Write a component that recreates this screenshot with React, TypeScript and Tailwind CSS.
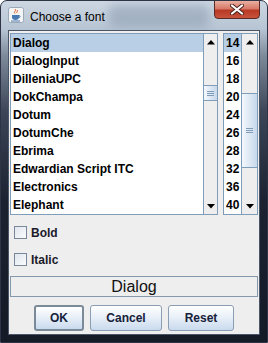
import React from "react";

const fonts = [
  "Dialog",
  "DialogInput",
  "DilleniaUPC",
  "DokChampa",
  "Dotum",
  "DotumChe",
  "Ebrima",
  "Edwardian Script ITC",
  "Electronics",
  "Elephant",
];
const sizes = ["14", "16", "18", "20", "24", "26", "28", "32", "36", "40"];

function Arrow({ down }: { down?: boolean }) {
  return (
    <svg width="8" height="5" viewBox="0 0 8 5">
      <path d={down ? "M0 0H8L4 4.5Z" : "M0 4.5H8L4 0Z"} fill="#000" />
    </svg>
  );
}

function Grip() {
  return (
    <div className="flex flex-col gap-[1px] items-center">
      <div className="w-[7px] h-[1px] bg-[#7f9db9]" />
      <div className="w-[7px] h-[1px] bg-[#7f9db9]" />
      <div className="w-[7px] h-[1px] bg-[#7f9db9]" />
    </div>
  );
}

function ScrollBar({ thumbTop, thumbH, w }: { thumbTop: number; thumbH: number; w: string }) {
  return (
    <div className={`${w} border-l border-[#7f9db9] bg-[#eeeeee] flex flex-col`}>
      <div className="h-[16px] flex items-center justify-center">
        <Arrow />
      </div>
      <div className="flex-1 flex flex-col">
        <div style={{ height: thumbTop }} />
        <div
          style={{ height: thumbH }}
          className="border-y border-[#7f9db9] bg-[linear-gradient(90deg,#f4f8fc,#c6d8ec)] flex items-center justify-center"
        >
          <Grip />
        </div>
      </div>
      <div className="h-[16px] flex items-center justify-center">
        <Arrow down />
      </div>
    </div>
  );
}

function JavaIcon() {
  return (
    <svg width="16" height="16" viewBox="0 0 16 16">
      <rect x="0.5" y="0.5" width="15" height="15" rx="2" fill="#f4f4f4" stroke="#9aa8b8" />
      <path d="M7 2c2 1.5-2 3 0 4.5M9 3c1.5 1-1 2 0 3" stroke="#e0581e" strokeWidth="1" fill="none" />
      <path d="M4 8h7v2.5c0 1.5-1.5 2.5-3.5 2.5S4 12 4 10.5Z" fill="#4a78b0" />
      <path d="M11 8.5c1.5 0 1.5 2 0 2" stroke="#4a78b0" fill="none" />
      <path d="M3 14h9" stroke="#4a78b0" />
    </svg>
  );
}

function Button({ label, w, def }: { label: string; w: string; def?: boolean }) {
  return (
    <div
      className={`${w} h-[26px] rounded-[3px] ${
        def ? "border-2 border-[#7b8a99]" : "border border-[#8b9db3]"
      } bg-[linear-gradient(180deg,#ffffff,#e9f0f8_45%,#c9daee)] flex items-center justify-center text-[12px] font-bold text-[#16213a]`}
    >
      {label}
    </div>
  );
}

function CheckRow({ label }: { label: string }) {
  return (
    <div className="flex items-center h-[13px] pl-[4px]">
      <div className="w-[13px] h-[13px] border border-[#7a8797] bg-[linear-gradient(135deg,#dfe6ee,#fbfcfd)]" />
      <span className="ml-[4px] text-[12px] font-bold text-[#1a1a2a]">{label}</span>
    </div>
  );
}

export default function App() {
  return (
    <div
      className="w-[268px] h-[343px] flex flex-col rounded-t-[7px] border border-[#2c3446] bg-[linear-gradient(180deg,#cdd7e2_0px,#b6c4d3_28px,#7d8a9a_55px,#3c4658_110px,#1c2230_200px,#141a26_343px)] overflow-hidden"
      style={{ fontFamily: '"Liberation Sans", Arial, sans-serif' }}
    >
      <div className="relative h-[29px] flex items-start shrink-0 overflow-hidden">
        <div className="absolute left-[108px] top-[4px] w-[100px] h-[22px] rounded-[6px] bg-[#8797ad] blur-[5px] opacity-50" />
        <div className="relative mt-[6px] ml-[7px]">
          <JavaIcon />
        </div>
        <div className="relative ml-[6px] mt-[7px] text-[12px] text-black">Choose a font</div>
        <div className="relative ml-auto mr-[7px] w-[46px] h-[19px] -mt-[1px] rounded-b-[4px] border border-[#5a2a26] bg-[linear-gradient(180deg,#e9b0a2_0%,#d67a68_45%,#b83a26_55%,#c8523c_100%)] flex items-center justify-center">
          <svg width="14" height="11" viewBox="0 0 14 11">
            <path d="M2 1.5L12 9.5M12 1.5L2 9.5" stroke="#4a2320" strokeWidth="4" strokeLinecap="round" />
            <path d="M2 1.5L12 9.5M12 1.5L2 9.5" stroke="#ffffff" strokeWidth="2.2" strokeLinecap="round" />
          </svg>
        </div>
      </div>

      <div className="mx-[7px] h-[305px] border border-[#4a5568] bg-[#eeeeee] px-[1px] pt-[2px] flex flex-col">
        <div className="flex gap-[5px]">
          <div className="w-[208px] h-[182px] border border-[#7f9db9] flex bg-white">
            <div className="flex-1 flex flex-col">
              {fonts.map((f, i) => (
                <div
                  key={f}
                  className={`h-[18px] flex items-center pl-[2px] text-[12px] font-bold text-black ${
                    i === 0 ? "bg-[#b8cfe5]" : ""
                  }`}
                >
                  {f}
                </div>
              ))}
            </div>
            <ScrollBar w="w-[14px]" thumbTop={35} thumbH={16} />
          </div>
          <div className="w-[35px] h-[182px] border border-[#7f9db9] flex bg-white">
            <div className="flex-1 flex flex-col">
              {sizes.map((s, i) => (
                <div
                  key={s}
                  className={`h-[18px] flex items-center pl-[2px] text-[12px] font-bold text-black ${
                    i === 0 ? "bg-[#b8cfe5]" : ""
                  }`}
                >
                  {s}
                </div>
              ))}
            </div>
            <ScrollBar w="w-[16px]" thumbTop={43} thumbH={75} />
          </div>
        </div>

        <div className="mt-[11px] flex flex-col gap-[14px]">
          <CheckRow label="Bold" />
          <CheckRow label="Italic" />
        </div>

        <div className="mt-[10px] h-[21px] border border-[#8597ab] bg-[#eeeeee] flex items-center justify-center text-[16px] text-[#111]">
          Dialog
        </div>

        <div className="mt-[8px] flex justify-center gap-[6px]">
          <Button label="OK" w="w-[50px]" def />
          <Button label="Cancel" w="w-[72px]" />
          <Button label="Reset" w="w-[66px]" />
        </div>
      </div>
    </div>
  );
}
